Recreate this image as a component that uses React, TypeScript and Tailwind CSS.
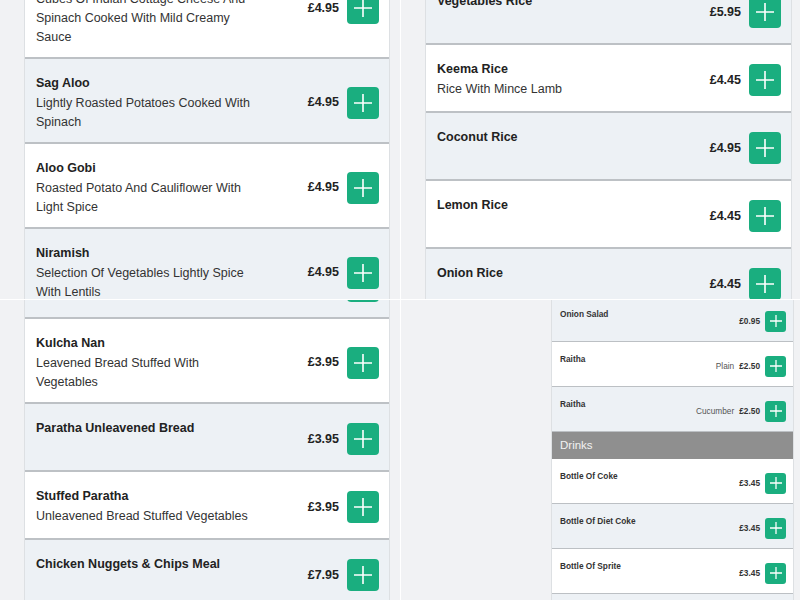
import React from "react";

type Item = { name: string; desc?: string; price: string; light: boolean; variant?: string };

function Plus({ size, stroke }: { size: number; stroke: number }) {
  return (
    <svg width={size} height={size} viewBox="0 0 18 18" fill="none">
      <path d="M9 0V18M0 9H18" stroke="white" strokeWidth={stroke} />
    </svg>
  );
}

function Row({ item }: { item: Item }) {
  return (
    <div
      className={`flex items-center min-h-[68px] pt-[14px] pb-[10px] pl-[11px] pr-[10px] border-b-2 border-[#bdc1c5] ${
        item.light ? "bg-[#edf1f5]" : "bg-white"
      }`}
    >
      <div className="w-[222px] self-start">
        <div className="text-[12.5px] leading-[20px] font-bold text-[#222]">{item.name}</div>
        {item.desc && (
          <div className="mt-px text-[12.5px] leading-[19px] text-[#333]">{item.desc}</div>
        )}
      </div>
      <div className="ml-auto flex items-center gap-2">
        <span className="text-[12.5px] font-bold text-[#222]">{item.price}</span>
        <div className="w-8 h-8 rounded-[4px] bg-[#1aae7f] flex items-center justify-center">
          <Plus size={18} stroke={1.6} />
        </div>
      </div>
    </div>
  );
}

function SmallRow({ item }: { item: Item }) {
  return (
    <div
      className={`flex h-[45px] border-b border-[#bcc0c4] pl-[8px] pr-[7px] ${
        item.light ? "bg-[#edf1f5]" : "bg-white"
      }`}
    >
      <div className="self-start pt-[11px] text-[8.3px] leading-[12px] font-bold text-[#333]">
        {item.name}
      </div>
      <div className="ml-auto self-center flex items-center gap-[5px] pt-[4px]">
        {item.variant && <span className="text-[8.3px] text-[#555]">{item.variant}</span>}
        <span className="text-[8.3px] font-bold text-[#333]">{item.price}</span>
        <div className="w-[21px] h-[21px] rounded-[3px] bg-[#1aae7f] flex items-center justify-center">
          <Plus size={12} stroke={1.9} />
        </div>
      </div>
    </div>
  );
}

const tl: Item[] = [
  {
    name: "Palak Paneer",
    desc: "Cubes Of Indian Cottage Cheese And Spinach Cooked With Mild Creamy Sauce",
    price: "£4.95",
    light: false,
  },
  { name: "Sag Aloo", desc: "Lightly Roasted Potatoes Cooked With Spinach", price: "£4.95", light: true },
  { name: "Aloo Gobi", desc: "Roasted Potato And Cauliflower With Light Spice", price: "£4.95", light: false },
  { name: "Niramish", desc: "Selection Of Vegetables Lightly Spice With Lentils", price: "£4.95", light: true },
];

const tr: Item[] = [
  { name: "Vegetables Rice", price: "£5.95", light: true },
  { name: "Keema Rice", desc: "Rice With Mince Lamb", price: "£4.45", light: false },
  { name: "Coconut Rice", price: "£4.95", light: true },
  { name: "Lemon Rice", price: "£4.45", light: false },
  { name: "Onion Rice", price: "£4.45", light: true },
];

const bl: Item[] = [
  { name: "Garlic Nan", price: "£3.45", light: true },
  { name: "Kulcha Nan", desc: "Leavened Bread Stuffed With Vegetables", price: "£3.95", light: false },
  { name: "Paratha Unleavened Bread", price: "£3.95", light: true },
  { name: "Stuffed Paratha", desc: "Unleavened Bread Stuffed Vegetables", price: "£3.95", light: false },
  { name: "Chicken Nuggets & Chips Meal", price: "£7.95", light: true },
];

const brTop: Item[] = [
  { name: "Onion Salad", price: "£0.95", light: true },
  { name: "Raitha", variant: "Plain", price: "£2.50", light: false },
  { name: "Raitha", variant: "Cucumber", price: "£2.50", light: true },
];

const brDrinks: Item[] = [
  { name: "Bottle Of Coke", price: "£3.45", light: false },
  { name: "Bottle Of Diet Coke", price: "£3.45", light: true },
  { name: "Bottle Of Sprite", price: "£3.45", light: false },
  { name: "Bottle Of Fanta", price: "£3.45", light: true },
];

export default function App() {
  return (
    <div className="w-[800px] h-[600px] grid grid-cols-[400px_399px] grid-rows-[299px_300px] gap-px bg-white font-['Liberation_Sans',Arial,sans-serif] overflow-hidden">
      <div className="overflow-hidden bg-[#f1f2f4]">
        <div className="ml-6 w-[366px] border-x border-[#dde0e3] -mt-[45px]">
          {tl.map((it, i) => (
            <Row key={i} item={it} />
          ))}
        </div>
      </div>
      <div className="overflow-hidden bg-[#f1f2f4]">
        <div className="ml-6 w-[367px] border-x border-[#dde0e3] -mt-[23px]">
          {tr.map((it, i) => (
            <Row key={i} item={it} />
          ))}
        </div>
      </div>
      <div className="overflow-hidden bg-[#f1f2f4]">
        <div className="ml-6 w-[366px] border-x border-[#dde0e3] -mt-[49px]">
          {bl.map((it, i) => (
            <Row key={i} item={it} />
          ))}
        </div>
      </div>
      <div className="overflow-hidden bg-[#f1f2f4]">
        <div className="ml-[150px] w-[243px] border-x border-[#dde0e3] -mt-[3px]">
          {brTop.map((it, i) => (
            <SmallRow key={i} item={it} />
          ))}
          <div className="h-[27px] bg-[#8f8f8f] text-[11.5px] text-[#f2f2f2] pl-[8px] flex items-center">
            Drinks
          </div>
          {brDrinks.map((it, i) => (
            <SmallRow key={i} item={it} />
          ))}
        </div>
      </div>
    </div>
  );
}
